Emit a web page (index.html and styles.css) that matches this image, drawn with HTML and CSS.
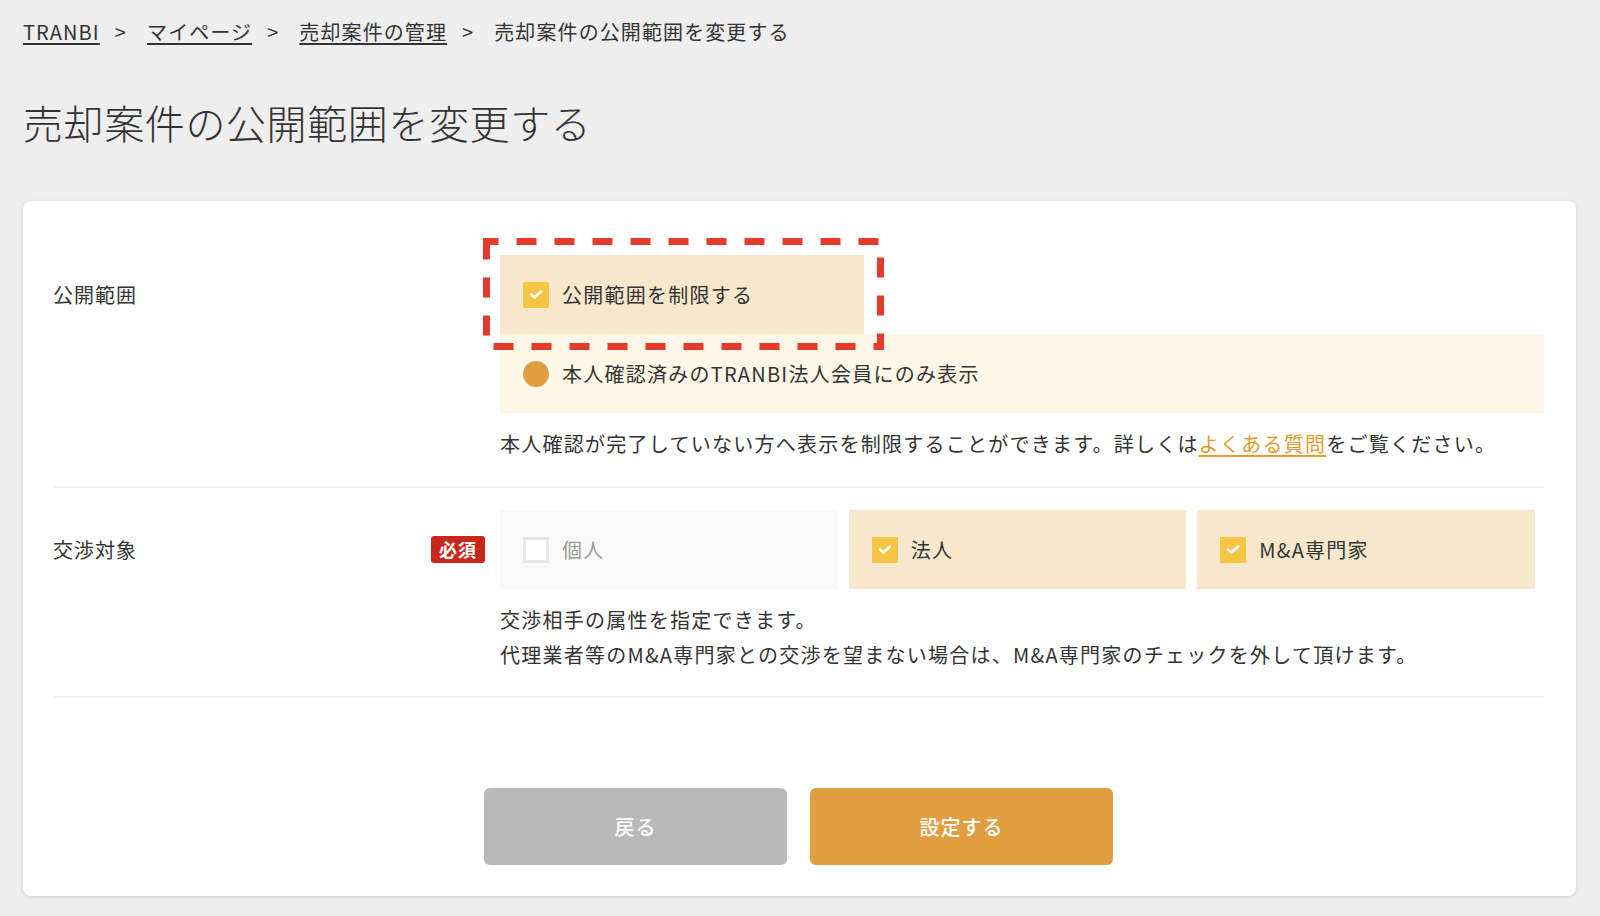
FILE: index.html
```html
<!DOCTYPE html>
<html lang="ja">
<head>
<meta charset="utf-8">
<title>売却案件の公開範囲を変更する</title>
<link rel="stylesheet" href="styles.css">
</head>
<body>
<div class="page">
  <nav class="crumbs">
    <a href="#">TRANBI</a><span class="sep">&gt;</span><a href="#">マイページ</a><span class="sep">&gt;</span><a href="#">売却案件の管理</a><span class="sep">&gt;</span><span class="current">売却案件の公開範囲を変更する</span>
  </nav>
  <h1 class="title">売却案件の公開範囲を変更する</h1>

  <section class="card">
    <div class="row row-first">
      <div class="label"><span>公開範囲</span></div>
      <div class="field">
        <div class="restrict">
          <div class="opt opt-on">
            <span class="box"><svg width="14" height="11" viewBox="0 0 14 11"><polyline points="2,5.5 5.5,8.5 12,2.5" fill="none" stroke="#fff" stroke-width="2.6" stroke-linecap="round" stroke-linejoin="round"/></svg></span>
            <span>公開範囲を制限する</span>
          </div>
          <svg class="highlight" width="401" height="112" viewBox="0 0 401 112"><rect x="3.5" y="3.5" width="394" height="105" fill="none" stroke="#e63b2a" stroke-width="7" stroke-dasharray="20 18" stroke-dashoffset="8"/></svg>
        </div>
        <div class="opt sub">
          <span class="radio"></span>
          <span>本人確認済みのTRANBI法人会員にのみ表示</span>
        </div>
        <p class="note">本人確認が完了していない方へ表示を制限することができます。詳しくは<a class="link" href="#">よくある質問</a>をご覧ください。</p>
      </div>
    </div>

    <div class="row">
      <div class="label"><span>交渉対象</span><span class="badge">必須</span></div>
      <div class="field">
        <div class="choices">
          <div class="opt opt-off">
            <span class="box box-empty"></span>
            <span>個人</span>
          </div>
          <div class="opt opt-on">
            <span class="box"><svg width="14" height="11" viewBox="0 0 14 11"><polyline points="2,5.5 5.5,8.5 12,2.5" fill="none" stroke="#fff" stroke-width="2.6" stroke-linecap="round" stroke-linejoin="round"/></svg></span>
            <span>法人</span>
          </div>
          <div class="opt opt-on">
            <span class="box"><svg width="14" height="11" viewBox="0 0 14 11"><polyline points="2,5.5 5.5,8.5 12,2.5" fill="none" stroke="#fff" stroke-width="2.6" stroke-linecap="round" stroke-linejoin="round"/></svg></span>
            <span>M&amp;A専門家</span>
          </div>
        </div>
        <p class="note">交渉相手の属性を指定できます。<br>代理業者等のM&amp;A専門家との交渉を望まない場合は、M&amp;A専門家のチェックを外して頂けます。</p>
      </div>
    </div>

    <div class="actions">
      <button class="btn btn-back" type="button">戻る</button>
      <button class="btn btn-submit" type="button">設定する</button>
    </div>
  </section>
</div>
</body>
</html>
```

FILE: styles.css
```css
html, body {
  margin: 0;
  padding: 0;
}

body {
  background: #eeeeee;
  color: #333333;
  font-family: "Noto Sans CJK JP", "Noto Sans", sans-serif;
  font-weight: 400;
}

.page {
  padding: 17px 24px 20px 23px;
}

.crumbs {
  display: flex;
  align-items: center;
  font-size: 20px;
  line-height: 30px;
  letter-spacing: 1.1px;
}

.crumbs a {
  color: #333333;
  text-decoration: underline;
  text-underline-offset: 3px;
}

.sep {
  margin: 0 20px 0 15px;
}

.title {
  margin: 47px 0 0;
  font-size: 40px;
  font-weight: 300;
  line-height: 56px;
  letter-spacing: 0.6px;
  color: #333333;
}

.card {
  margin-top: 51px;
  background: #ffffff;
  border-radius: 8px;
  box-shadow: 0 1px 4px rgba(0, 0, 0, 0.12);
  padding: 32px 32px 31px 30px;
}

.row {
  display: flex;
  padding: 22px 0 24px;
  border-bottom: 2px solid #f0f0f0;
}

.row-first {
  padding-bottom: 25px;
}

.label {
  flex: none;
  width: 447px;
  height: 79px;
  box-sizing: border-box;
  padding-right: 15px;
  display: flex;
  align-items: center;
  justify-content: space-between;
  font-size: 20px;
  letter-spacing: 1px;
}

.badge {
  height: 27px;
  line-height: 27px;
  padding: 0 8px;
  border-radius: 3px;
  background: #c8281c;
  color: #ffffff;
  font-size: 18px;
  font-weight: 700;
  letter-spacing: 1px;
}

.field {
  flex: 1;
  min-width: 0;
}

.opt {
  height: 79px;
  box-sizing: border-box;
  padding-left: 23px;
  display: flex;
  align-items: center;
  gap: 13px;
  font-size: 20px;
  letter-spacing: 1.25px;
}

.opt-on {
  background: #f7e7cc;
}

.opt-off {
  background: #f9f9f9;
  color: #999999;
}

.sub {
  background: #fdf7e7;
}

.restrict {
  position: relative;
  width: 364px;
}

.highlight {
  position: absolute;
  left: -17px;
  top: -17px;
  pointer-events: none;
}

.box {
  flex: none;
  width: 26px;
  height: 26px;
  box-sizing: border-box;
  background: #f6c544;
  display: flex;
  align-items: center;
  justify-content: center;
}

.box-empty {
  background: #ffffff;
  border: 3px solid #e6e6e6;
}

.radio {
  flex: none;
  width: 26px;
  height: 26px;
  border-radius: 50%;
  background: #e09e40;
}

.note {
  margin: 13px 0 0;
  font-size: 20px;
  line-height: 35px;
  letter-spacing: 1.25px;
}

.link {
  color: #e39a2d;
  text-decoration: underline;
  text-underline-offset: 3px;
}

.choices {
  display: grid;
  grid-template-columns: repeat(3, 1fr);
  gap: 11px;
  margin-right: 9px;
}

.actions {
  display: flex;
  justify-content: center;
  gap: 23px;
  margin-top: 90px;
}

.btn {
  width: 303px;
  height: 77px;
  border: none;
  border-radius: 6px;
  color: #ffffff;
  font-family: inherit;
  font-size: 20px;
  font-weight: 500;
  letter-spacing: 1px;
}

.btn-back {
  background: #b9b9b9;
}

.btn-submit {
  background: #e09e40;
}
```
